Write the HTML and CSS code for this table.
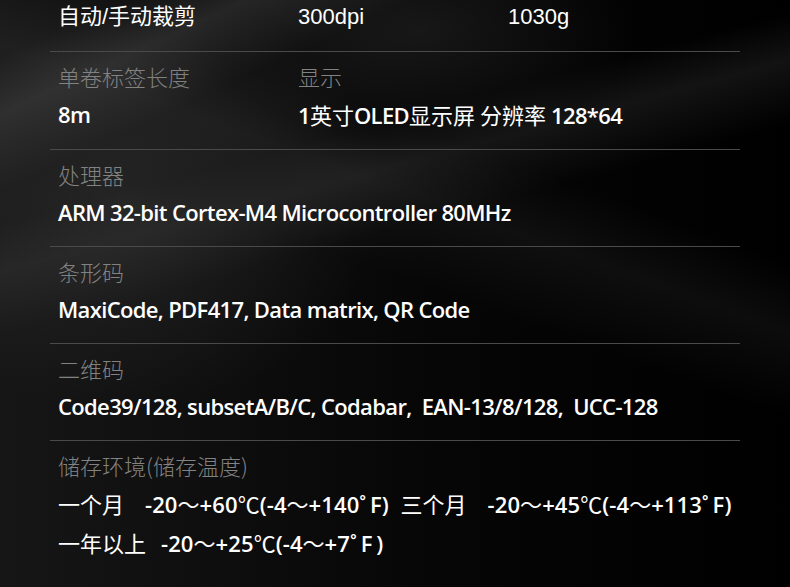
FILE: index.html
```html
<!DOCTYPE html>
<html lang="zh-CN">
<head>
  <meta charset="UTF-8">
  <title>产品参数</title>
  <link rel="stylesheet" href="styles.css">
</head>
<body>
  <div class="specs">
    <!-- 顶部一行：裁剪 / 分辨率 / 重量 -->
    <div class="row row-top">
      <div class="col col-a">自动/手动裁剪</div>
      <div class="col col-b">300dpi</div>
      <div class="col">1030g</div>
    </div>

    <div class="row">
      <div class="col col-a">
        <div class="label">单卷标签长度</div>
        <div class="value">8m</div>
      </div>
      <div class="col">
        <div class="label">显示</div>
        <div class="value">1<span class="cn">英寸</span>OLED<span class="cn">显示屏 分辨率</span> 128*64</div>
      </div>
    </div>

    <div class="row">
      <div class="col">
        <div class="label">处理器</div>
        <div class="value">ARM 32-bit Cortex-M4 Microcontroller 80MHz</div>
      </div>
    </div>

    <div class="row">
      <div class="col">
        <div class="label">条形码</div>
        <div class="value">MaxiCode, PDF417, Data matrix, QR Code</div>
      </div>
    </div>

    <div class="row">
      <div class="col">
        <div class="label">二维码</div>
        <div class="value">Code39/128, subsetA/B/C, Codabar,&nbsp; EAN-13/8/128,&nbsp; UCC-128</div>
      </div>
    </div>

    <div class="row row-last">
      <div class="col">
        <div class="label">储存环境(储存温度)</div>
        <div class="value multi"><span class="cn">一个月</span><span class="gap"></span>-20<span class="cn">～</span>+60<span class="cn">℃</span>(-4<span class="cn">～</span>+140˚&thinsp;F)&nbsp; <span class="cn">三个月</span><span class="gap"></span>-20<span class="cn">～</span>+45<span class="cn">℃</span>(-4<span class="cn">～</span>+113˚&thinsp;F)</div>
        <div class="value multi"><span class="cn">一年以上</span><span class="gap small"></span>-20<span class="cn">～</span>+25<span class="cn">℃</span>(-4<span class="cn">～</span>+7˚&thinsp;F&thinsp;)</div>
      </div>
    </div>
  </div>
</body>
</html>
```

FILE: styles.css
```css
* {
  margin: 0;
  padding: 0;
  box-sizing: border-box;
}

body {
  height: 100vh;
  overflow: hidden;
  background-color: #020202;
  background-image:
    linear-gradient(155deg, rgba(0,0,0,0) 6%, rgba(80,80,80,0.35) 12%, rgba(0,0,0,0) 20%),
    linear-gradient(165deg, rgba(0,0,0,0) 28%, rgba(60,60,60,0.3) 34%, rgba(0,0,0,0) 42%),
    linear-gradient(200deg, rgba(0,0,0,0) 30%, rgba(60,60,60,0.2) 38%, rgba(0,0,0,0) 48%),
    radial-gradient(ellipse 380px 300px at 120px 200px, rgba(65,65,65,0.4), rgba(0,0,0,0) 70%),
    radial-gradient(ellipse 300px 160px at 420px 30px, rgba(55,55,55,0.35), rgba(0,0,0,0) 70%),
    linear-gradient(90deg, #161616 0%, #060606 55%, #000 100%);
  font-family: "Open Sans", "Noto Sans CJK SC", sans-serif;
  color: #fff;
}

.specs {
  width: 690px;
  margin-left: 50px;
}

.row {
  display: flex;
  padding: 9px 0 19px 8px;
  border-bottom: 1px solid #4a4a4a;
}

.row-top {
  padding-top: 2px;
  padding-bottom: 19px;
  font-family: "Liberation Sans", "Noto Sans CJK SC", sans-serif;
  font-size: 22px;
  line-height: 30px;
}

.row-last {
  border-bottom: none;
}

.col-a {
  width: 240px;
}

.col-b {
  width: 210px;
}

.label {
  font-family: "Noto Sans CJK SC", sans-serif;
  font-weight: 300;
  font-size: 22px;
  line-height: 30px;
  color: #828282;
}

.value {
  margin-top: 8px;
  font-size: 22px;
  font-weight: 600;
  line-height: 30px;
  letter-spacing: -0.65px;
  white-space: nowrap;
}

.cn {
  font-family: "Noto Sans CJK SC", sans-serif;
  font-weight: 400;
  letter-spacing: 0;
}

.value.multi {
  margin-top: 4px;
  line-height: 38px;
  letter-spacing: 0.1px;
}

.value.multi + .value.multi {
  margin-top: 0;
}

.gap {
  display: inline-block;
  width: 21px;
}

.gap.small {
  width: 15px;
}
```
